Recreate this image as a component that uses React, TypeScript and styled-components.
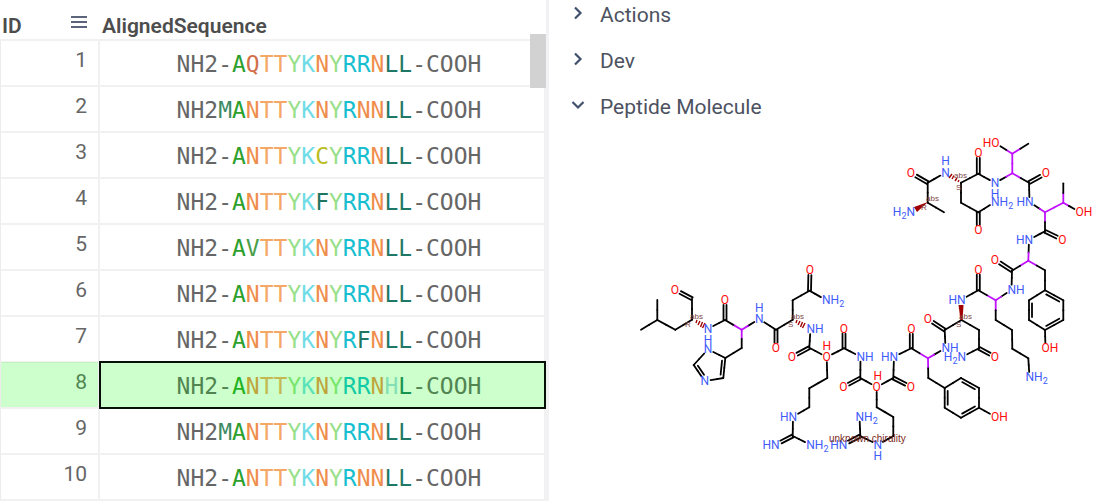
import React from 'react';
import styled, { createGlobalStyle } from 'styled-components';

const GlobalStyle = createGlobalStyle`
  *, *::before, *::after { box-sizing: border-box; }
  body { margin: 0; background: #fff; font-family: Roboto, "Liberation Sans", sans-serif; }
`;

const Layout = styled.main`
  display: grid;
  grid-template-columns: minmax(0, 549fr) minmax(0, 558fr);
  height: 100vh;
  overflow: hidden;
`;

const GridPane = styled.section`
  position: relative;
  border-right: 3px solid #f2f2f5;
  overflow: hidden;
`;

const DataTable = styled.table`
  width: 100%;
  border-collapse: separate;
  border-spacing: 0;
  table-layout: fixed;
`;

const HeaderCell = styled.th<{ $width?: number }>`
  width: ${(p) => (p.$width ? `${p.$width}px` : 'auto')};
  height: 41px;
  padding: 13px 0 0 2px;
  border-bottom: 2px solid #f1f1f1;
  color: #4d4d4d;
  font-size: 21px;
  font-weight: 600;
  line-height: 26px;
  text-align: left;
`;

const HeaderContent = styled.div`
  display: flex;
  justify-content: space-between;
  align-items: flex-start;
`;

const MenuButton = styled.button`
  display: flex;
  flex-direction: column;
  gap: 3px;
  width: 16px;
  margin: 3px 13px 0 0;
  padding: 0;
  border: 0;
  background: none;
`;

const MenuLine = styled.span`
  width: 16px;
  height: 2px;
  background: #5c647c;
`;

const Cell = styled.td<{ $selected?: boolean }>`
  position: relative;
  height: 46px;
  padding: 0;
  border-right: 2px solid #f1f1f1;
  border-bottom: 2px solid #f1f1f1;
  &::after {
    content: '';
    display: ${(p) => (p.$selected ? 'block' : 'none')};
    position: absolute;
    inset: -1px 0 0 0;
    background: rgba(0, 255, 0, 0.2);
  }
`;

const IdCell = styled(Cell)`
  padding: 0 11px 6px 0;
  border-left: 1px solid #ececec;
  color: #666;
  font-size: 21px;
  line-height: 24px;
  text-align: right;
`;

const SequenceCell = styled(Cell)`
  padding-top: 2px;
  text-align: center;
  &::after {
    inset: -2px -2px -2px -1px;
    border: 2px solid #061006;
  }
`;

const Sequence = styled.span`
  padding-left: 14px;
  font-family: "DejaVu Sans Mono", monospace;
  font-size: 23px;
  line-height: 26px;
  color: #666;
  white-space: pre;
`;

const Residue = styled.span<{ $color: string }>`
  color: ${(p) => p.$color};
`;

const ScrollThumb = styled.div`
  position: absolute;
  top: 34px;
  right: 0;
  width: 16px;
  height: 54px;
  background: #d2d2d2;
`;

const DetailPane = styled.aside`
  display: flex;
  flex-direction: column;
  gap: 8px;
  overflow: hidden;
`;

const Accordion = styled.div`
  display: flex;
  flex-direction: column;
  gap: 16px;
`;

const AccordionHeader = styled.button`
  display: flex;
  align-items: center;
  gap: 13px;
  height: 30px;
  padding: 0 0 0 22px;
  border: 0;
  background: none;
  color: #4d5261;
  font-family: inherit;
  font-size: 21px;
  line-height: 30px;
  text-align: left;
`;

const Chevron = styled.svg`
  width: 16px;
  height: 16px;
  margin-bottom: 4px;
  fill: none;
  stroke: #41506c;
  stroke-width: 2.2;
`;

const Structure = styled.svg`
  display: block;
  width: 100%;
  height: auto;
  font-family: Roboto, "Liberation Sans", sans-serif;
  font-size: 12px;
`;

const residueColors: Record<string, string> = {
  A: '#2ca02c', Q: '#d1704b', T: '#f5a866', Y: '#98df8a', K: '#70dce6',
  N: '#ef8e4c', R: '#17becf', L: '#1f7865', M: '#3c8b66', C: '#bcbd22',
  F: '#1f7560', V: '#4a9e4a', H: '#a7d8e1',
};

const rows = [
  ['-', 'AQTTYKNYRRNLL'],
  ['M', 'ANTTYKNYRNNLL'],
  ['-', 'ANTTYKCYRRNLL'],
  ['-', 'ANTTYKFYRRNLL'],
  ['-', 'AVTTYKNYRRNLL'],
  ['-', 'ANTTYKNYRRNLL'],
  ['-', 'ANTTYKNYRFNLL'],
  ['-', 'ANTTYKNYRRNHL'],
  ['M', 'ANTTYKNYRRNLL'],
  ['-', 'ANTTYKNYRNNLL'],
];
const selectedId = 8;

// Atom: x, y, label ('' for carbon, '*' for a chiral carbon)
type Atom = [number, number, string?];
const atoms: Record<string, Atom> = {
  a1: [911, 173, 'O'], a2: [927.7, 182.7], a3: [945.5, 172.7, 'N'], a4: [927.7, 202.7], a5: [944, 212.3], a6: [911, 212, 'H2N'],
  b1: [961, 182.7], b2: [978.3, 173.7], b3: [978.3, 153, 'O'], b4: [961, 202.7], b5: [978.3, 212.3], b6: [978.3, 230, 'O'], b7: [995, 202, 'NH2'], b8: [995, 183, 'N'],
  c1: [1012.3, 173.3, '*'], c2: [1012.3, 153.7, '*'], c3: [995.5, 143, 'HO'], c4: [1028.3, 143.7], c5: [1029, 182.7], c6: [1046, 173.3, 'O'], c7: [1029.5, 202, 'HN'],
  d1: [1045, 212.3, '*'], d2: [1063.3, 202.7, '*'], d3: [1063.3, 183.3], d4: [1079.5, 212, 'OH'], d5: [1045, 231.3], d6: [1062.3, 239.7, 'O'], d7: [1029, 239.7, 'HN'],
  e1: [1028.3, 260.7, '*'], e2: [1012, 270.7], e3: [995, 259.7, 'O'], e4: [1045, 270.3], e5: [1045, 290.3], e6: [1063.3, 300.3], e7: [1063.3, 320], e8: [1045, 330], e9: [1029, 320], e10: [1029, 300.3], e11: [1045.5, 348, 'OH'], e12: [1011.5, 289.7, 'NH'],
  f1: [995.7, 300.3, '*'], f2: [978.3, 290.3], f3: [978.3, 269.7, 'O'], f4: [961.5, 299.7, 'HN'], f5: [995.7, 320], f6: [1012, 330], f7: [1012.3, 348.7], f8: [1028.3, 358.3], f9: [1029.5, 377, 'NH2'],
  g1: [961.5, 320], g2: [944.7, 330], g3: [928, 319, 'O'], g4: [979, 330], g5: [979, 348.3], g6: [995, 357, 'O'], g7: [962, 357, 'H2N'], g8: [945.5, 348, 'NH'],
  h1: [928, 358.3, '*'], h2: [911.3, 348.3], h3: [911.3, 329, 'O'], h4: [928.3, 378], h5: [944.7, 388], h6: [961, 378], h7: [979, 388], h8: [979, 407.7], h9: [961, 417.7], h10: [944.7, 407.7], h11: [995, 416.7, 'OH'], h12: [894, 356.7, 'HN'],
  i1: [893.3, 378], i2: [911, 387, 'O'], i3: [876.7, 387, 'O'], i4: [860.3, 378], i5: [843.3, 387, 'O'], i6: [860.5, 356.7, 'NH'],
  i7: [876.7, 407.3], i8: [893.3, 417], i9: [893.3, 436], i10: [877.7, 444.7, 'N'], i11: [860.3, 436], i12: [859.5, 416.7, 'NH2'], i13: [843.3, 444.7, 'HN'],
  j1: [844, 348.3], j2: [844, 328.7, 'O'], j3: [826.7, 357, 'O'], j4: [809.3, 347.7], j5: [792, 357, 'O'], j6: [810.5, 329, 'NH'],
  j7: [827.3, 378], j8: [809.3, 388.3], j9: [809.3, 407.3], j10: [793, 416.7, 'HN'], j11: [792.7, 436], j12: [775.7, 444.7, 'HN'], j13: [810.3, 444.7, 'NH2'],
  k1: [792.7, 319.7], k2: [792.7, 300.3], k3: [809.5, 290.7], k4: [810, 270, 'O'], k5: [826, 300, 'NH2'], k6: [776, 329.7], k7: [776, 347.7, 'O'], k8: [759.3, 319, 'N'],
  l1: [741.7, 329.7, '*'], l2: [725, 320], l3: [725, 300, 'O'], l4: [741.7, 348], l5: [725.3, 358], l6: [723.3, 378], l7: [704.7, 381, 'N'], l8: [693.7, 365], l9: [708, 349.3, 'N'], l10: [708, 328.7, 'N'],
  m1: [692, 319.7], m2: [692, 298.7], m3: [675, 289.7, 'O'], m4: [675.3, 329.7], m5: [657.3, 320], m6: [657.3, 300], m7: [641, 329.7],
};

// "-" single, "=" double, ">" ring double with the second line inside
const bonds = `
a1=a2 a2-a3 a2-a4 a4-a5 b1-b2 b2=b3 b1-b4 b4-b5 b5=b6 b5-b7 b2-b8 b8-c1 c1-c2 c2-c3 c2-c4 c1-c5 c5=c6 c5-c7
c7-d1 d1-d2 d2-d3 d2-d4 d1-d5 d5=d6 d5-d7 d7-e1 e1-e2 e2=e3 e1-e4 e4-e5 e5>e6 e6-e7 e7>e8 e8-e9 e9>e10 e10-e5 e8-e11 e2-e12
e12-f1 f1-f2 f2=f3 f2-f4 f1-f5 f5-f6 f6-f7 f7-f8 f8-f9 g1-g2 g2=g3 g1-g4 g4-g5 g5=g6 g5-g7 g2-g8 g8-h1
h1-h2 h2=h3 h1-h4 h4-h5 h5-h6 h6>h7 h7-h8 h8>h9 h9-h10 h10>h5 h8-h11 h2-h12 h12-i1 i1=i2 i1-i3 i3-i4 i4=i5 i4-i6
i3-i7 i7-i8 i8-i9 i9-i10 i10-i11 i11-i12 i11=i13 i6-j1 j1=j2 j1-j3 j3-j4 j4=j5 j4-j6 j3-j7 j7-j8 j8-j9 j9-j10 j10-j11 j11=j12 j11-j13
k1-k2 k2-k3 k3=k4 k3-k5 k1-k6 k6=k7 k6-k8 k8-l1 l1-l2 l2=l3 l1-l4 l4-l5 l5>l6 l6-l7 l7>l8 l8-l9 l9-l5 l2-l10
m1-m2 m2=m3 m1-m4 m4-m5 m5-m6 m5-m7`.trim().split(/\s+/);

const stereoNotes: [number, number, string][] = [
  [926, 201, 'abs'], [921, 210, 'R'], [954, 178, 'abs'], [956, 190, 'S'], [959, 319, 'abs'], [956, 327, 'S'],
  [690, 319, 'abs'], [685, 327, 'R'], [791, 319, 'abs'], [788, 327, 'S'],
];

const nitrogenBlue = '#3f5cfa';
const oxygenRed = '#ff0d0d';

const hydrogens: [number, number, string][] = [
  [945.5, 161, nitrogenBlue], [995, 194.3, nitrogenBlue], [759.3, 307.7, nitrogenBlue], [708, 340, nitrogenBlue],
  [877.7, 455.7, nitrogenBlue], [826.7, 346, oxygenRed], [877.7, 376, oxygenRed],
];

function Bond({ code }: { code: string }) {
  const [, from, kind, to] = code.match(/^(\w+)([-=>])(\w+)$/)!;
  const [x1, y1, l1 = ''] = atoms[from];
  const [x2, y2, l2 = ''] = atoms[to];
  const len = Math.hypot(x2 - x1, y2 - y1);
  const ux = (x2 - x1) / len;
  const uy = (y2 - y1) / len;
  const clear = (label: string) => (label && label !== '*' ? 5 + Math.abs(ux) : 0);
  const s = clear(l1);
  const e = len - clear(l2);
  const line = (a: number, b: number, off: number, color: string, key: string) => (
    <line key={key} x1={x1 + ux * a - uy * off} y1={y1 + uy * a + ux * off}
      x2={x1 + ux * b - uy * off} y2={y1 + uy * b + ux * off} stroke={color} />
  );
  if (kind === '=') return <>{line(s, e, -1.5, '#000', 'a')}{line(s, e, 1.5, '#000', 'b')}</>;
  const mid = (s + e) / 2;
  const purple = '#c010ff';
  return (
    <>
      {line(s, mid, 0, l1 === '*' ? purple : '#000', 'a')}
      {line(mid, e, 0, l2 === '*' ? purple : '#000', 'b')}
      {kind === '>' && line(Math.max(s, 3), Math.min(e, len - 3), 3, '#000', 'c')}
    </>
  );
}

function AtomLabel({ atom }: { atom: Atom }) {
  const [x, y, label] = atom;
  if (!label || label === '*') return null;
  const endsAtAtom = /^H/.test(label);
  const single = label.length === 1;
  return (
    <text x={single ? x : endsAtAtom ? x + 4 : x - 4} y={y + 4}
      textAnchor={single ? 'middle' : endsAtAtom ? 'end' : 'start'}
      fill={label.includes('O') ? oxygenRed : nitrogenBlue}>
      {label.split('2').map((part, i) => (
        <React.Fragment key={i}>
          {i > 0 && <tspan dy={3} fontSize={9}>2</tspan>}
          {part && <tspan dy={i > 0 ? -3 : 0}>{part}</tspan>}
        </React.Fragment>
      ))}
    </text>
  );
}

function Molecule() {
  return (
    <Structure viewBox="549 130 558 340" role="img" aria-label="Peptide molecule structure">
      <g strokeWidth={1.8} strokeLinecap="round">
        {bonds.map((b) => <Bond key={b} code={b} />)}
      </g>
      <g fill="#a00000">
        <path d="M928 202L914 207L917 212Z" />
        <path d="M958.5 305H963.5L962.5 320H960.5Z" />
      </g>
      <g stroke="#a00000" strokeWidth={1.4}>
        <path d="M949 178L952 174M952 179L954 175.500M955 181L957 178M958 182L959 180" />
        <path d="M697 320L696 323M700 321L698 325M702.500 322L700.500 327M705 323L702.500 328" />
        <path d="M797 320L796 323M800 321L798 325M802.500 322L800.500 327M805 323L802.500 328" />
      </g>
      {Object.entries(atoms).map(([id, atom]) => <AtomLabel key={id} atom={atom} />)}
      {hydrogens.map(([x, y, color]) => (
        <text key={`${x}-${y}`} x={x} y={y + 4} textAnchor="middle" fill={color}>H</text>
      ))}
      <g fill="#7d4646" fontSize={8} fontFamily="Liberation Sans">
        {stereoNotes.map(([x, y, note]) => <text key={`${x}-${y}`} x={x} y={y}>{note}</text>)}
      </g>
      <text x={829} y={442} fontSize={10} fontFamily="Liberation Sans" fill="#7a2a20">unknown chirality</text>
    </Structure>
  );
}

function Section({ title, open }: { title: string; open?: boolean }) {
  return (
    <AccordionHeader type="button" aria-expanded={!!open}>
      <Chevron viewBox="0 0 16 16" aria-hidden="true">
        <path d={open ? 'M1.500 5L7 10.500L12.500 5' : 'M4 2.500L9.500 8L4 13.500'} />
      </Chevron>
      {title}
    </AccordionHeader>
  );
}

export default function App() {
  return (
    <>
      <GlobalStyle />
      <Layout>
        <GridPane>
          <DataTable>
            <thead>
              <tr>
                <HeaderCell scope="col" $width={100}>
                  <HeaderContent>
                    ID
                    <MenuButton type="button" aria-label="Column menu">
                      <MenuLine /><MenuLine /><MenuLine />
                    </MenuButton>
                  </HeaderContent>
                </HeaderCell>
                <HeaderCell scope="col">AlignedSequence</HeaderCell>
              </tr>
            </thead>
            <tbody>
              {rows.map(([lead, residues], i) => (
                <tr key={i}>
                  <IdCell $selected={i + 1 === selectedId}>{i + 1}</IdCell>
                  <SequenceCell $selected={i + 1 === selectedId}>
                    <Sequence>
                      NH2
                      {lead === '-' ? '-' : <Residue $color={residueColors[lead]}>{lead}</Residue>}
                      {residues.split('').map((r, n) => (
                        <Residue key={n} $color={residueColors[r]}>{r}</Residue>
                      ))}
                      -COOH
                    </Sequence>
                  </SequenceCell>
                </tr>
              ))}
            </tbody>
          </DataTable>
          <ScrollThumb />
        </GridPane>
        <DetailPane>
          <Accordion>
            <Section title="Actions" />
            <Section title="Dev" />
            <Section title="Peptide Molecule" open />
          </Accordion>
          <Molecule />
        </DetailPane>
      </Layout>
    </>
  );
}
